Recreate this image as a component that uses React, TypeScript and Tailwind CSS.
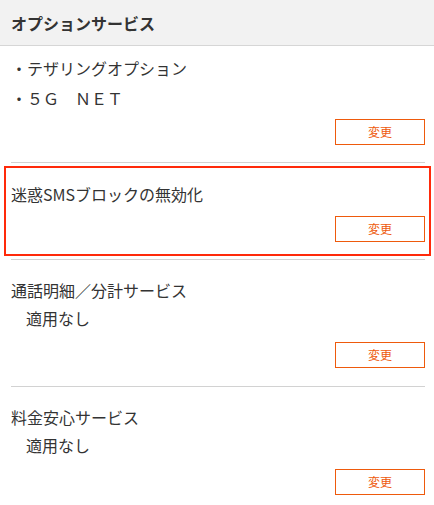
import React from 'react';

const ChangeButton: React.FC = () => (
    <div className="flex justify-end">
        <button
            type="button"
            className="w-[90px] h-[26px] border border-[#ee5a0c] bg-white text-[12px] leading-none text-[#ee5a0c]"
        >
            変更
        </button>
    </div>
);

const App: React.FC = () => {
    return (
        <div
            className="w-[434px] min-h-[505px] bg-white text-[#333] text-[16px]"
            style={{ fontFamily: '"Noto Sans CJK JP", "Noto Sans", sans-serif' }}
        >
            {/* Header */}
            <div className="h-[46px] bg-[#f2f2f2] border-b border-[#d6d6d6] px-[11px] flex items-center">
                <h2 className="text-[16px] font-bold text-[#333]">オプションサービス</h2>
            </div>

            {/* Options */}
            <div className="ml-[11px] mr-[9px] pt-[7px] pb-[17px] border-b border-[#d2d2d2]">
                <p className="leading-[30px]">・テザリングオプション</p>
                <p className="leading-[30px]">・５Ｇ　ＮＥＴ</p>
                <div className="mt-[6px]">
                    <ChangeButton />
                </div>
            </div>

            {/* SMS block - highlighted */}
            <div className="ml-[4px] mr-[3px] mt-[3px] border-2 border-[#ff2a0a] pl-[5px] pr-[4px] pt-[12px] pb-[12px]">
                <p className="leading-[28px]">迷惑SMSブロックの無効化</p>
                <div className="mt-[8px]">
                    <ChangeButton />
                </div>
            </div>
            <div className="ml-[11px] mr-[9px] mt-[3px] border-b border-[#d2d2d2]" />

            {/* Call details */}
            <div className="ml-[11px] mr-[9px] pt-[16px] pb-[18px] border-b border-[#d2d2d2]">
                <p className="leading-[28px]">通話明細／分計サービス</p>
                <p className="leading-[28px] pl-[15px]">適用なし</p>
                <div className="mt-[10px]">
                    <ChangeButton />
                </div>
            </div>

            {/* Rate safety */}
            <div className="ml-[11px] mr-[9px] pt-[16px] pb-[11px]">
                <p className="leading-[28px]">料金安心サービス</p>
                <p className="leading-[28px] pl-[15px]">適用なし</p>
                <div className="mt-[10px]">
                    <ChangeButton />
                </div>
            </div>
        </div>
    );
};

export default App;
